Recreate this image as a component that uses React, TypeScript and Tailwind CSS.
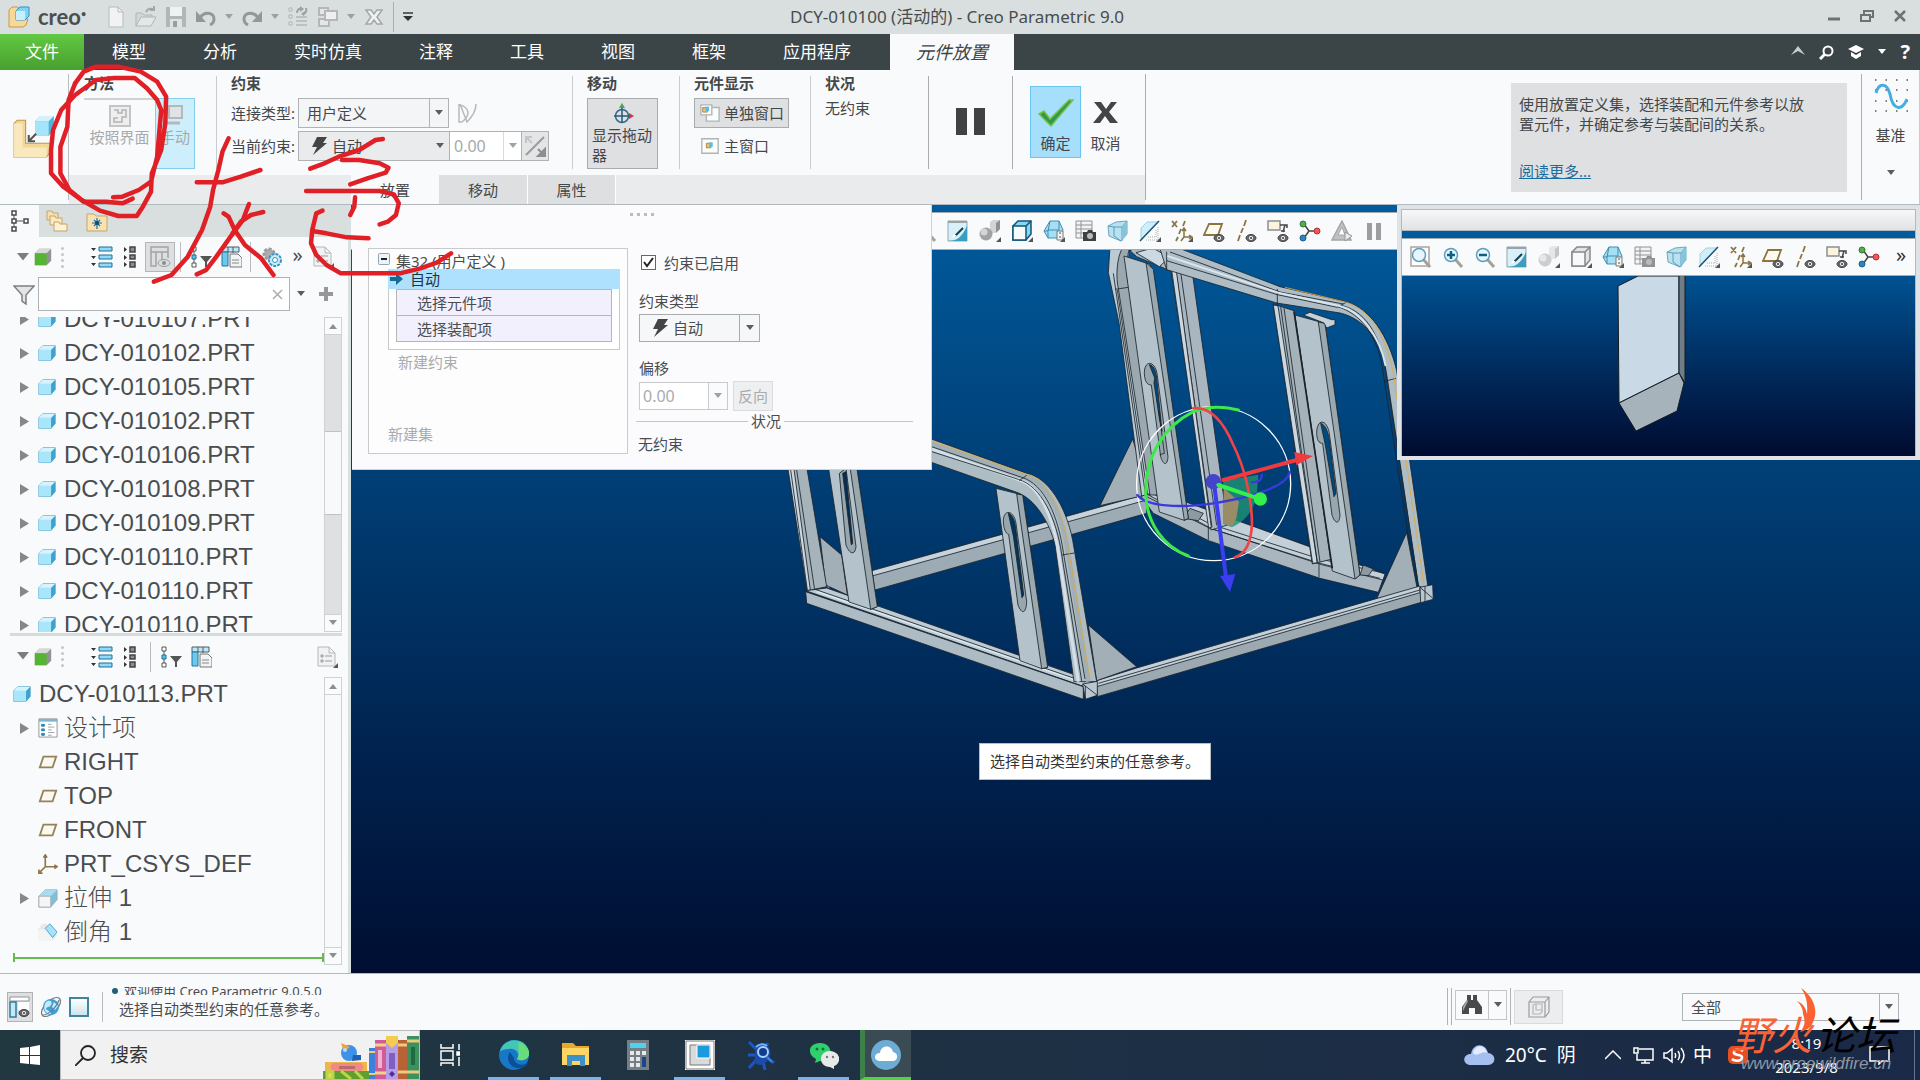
import type { ReactNode } from 'react'

const MENUS = ['模型', '分析', '实时仿真', '注释', '工具', '视图', '框架', '应用程序']

const PARTS = [
  'DCY-010107.PRT',
  'DCY-010102.PRT',
  'DCY-010105.PRT',
  'DCY-010102.PRT',
  'DCY-010106.PRT',
  'DCY-010108.PRT',
  'DCY-010109.PRT',
  'DCY-010110.PRT',
  'DCY-010110.PRT',
  'DCY-010110.PRT',
]

/* ---------- icons ---------- */

function Ico({ children, size = 22 }: { children: ReactNode; size?: number }) {
  return (
    <svg width={size} height={size} viewBox="0 0 22 22" fill="none" className="shrink-0" aria-hidden>
      {children}
    </svg>
  )
}

function Caret({ className = 'text-[#5a5e60]' }: { className?: string }) {
  return (
    <svg width="8" height="6" viewBox="0 0 8 6" className={`shrink-0 ${className}`} aria-hidden>
      <path d="M0 0h8L4 5z" fill="currentColor" />
    </svg>
  )
}

const Bolt = () => (
  <svg width="17" height="18" viewBox="0 0 17 18" className="shrink-0" aria-hidden>
    <path d="M6 0h10l-4 6h4L2 18l4-8H1z" fill="#444" />
  </svg>
)

const Corner = () => <path d="M22 17v5h-5z" fill="#555" />

const CreoLogo = () => (
  <Ico>
    <path d="M1 4l3-3h6v12h10l-2 6-3 2H1z" fill="#f6d898" stroke="#c49a4c" />
    <path d="M8 5l4-4h9v9l-4 4H8z" fill="#7fd4f5" stroke="#2f93bd" />
    <path d="M8 5h9v9H8z" fill="#c9effd" />
  </Ico>
)

const NewFile = () => (
  <Ico><path d="M4 1h9l5 5v15H4z" fill="#f1f3f3" stroke="#b7bbbb" /><path d="M13 1v5h5" stroke="#b7bbbb" /></Ico>
)
const OpenFile = () => (
  <Ico>
    <path d="M1 20V7h6l2 2h8v3" fill="#d2d6d6" stroke="#b1b5b5" />
    <path d="M1 20l5-9h15l-5 9z" fill="#e4e7e7" stroke="#b1b5b5" />
    <path d="M11 6c2-4 5-4 8-2m0-4v4h-4" stroke="#a2a6a6" strokeWidth="2" />
  </Ico>
)
const SaveFile = () => (
  <Ico><path d="M1 1h20v20H1z" fill="#b2b6b6" /><path d="M5 1h12v9H5z" fill="#f0f2f2" /><path d="M5 13h12v8H5z" fill="#dfe2e2" /><path d="M8 15h4v6H8z" fill="#999d9d" /></Ico>
)
const Undo = ({ flip = false }: { flip?: boolean }) => (
  <Ico>
    <g transform={flip ? 'translate(22 0) scale(-1 1)' : undefined}>
      <path d="M5 12c4-7 14-6 14 1 0 3-2 5-4 6" stroke="#939797" strokeWidth="3" />
      <path d="M1 5v11h10z" fill="#939797" />
    </g>
  </Ico>
)
const Regen = () => (
  <Ico>
    <path d="M2 2h3v3H2zM2 9h3v3H2zM2 16h3v3H2z" fill="#e6e9e9" stroke="#aeb2b2" />
    <path d="M9 11h11M9 15h11M9 19h11" stroke="#bcc0c0" strokeWidth="2" />
    <path d="M10 7c0-4 3-5 5-4M19 2c1 3 0 5-3 6" stroke="#9da1a1" strokeWidth="2" />
    <path d="M13 0l4 3-4 3zM18 5l-4 3 3 2z" fill="#9da1a1" />
  </Ico>
)
const WindowsIco = () => (
  <Ico>
    <path d="M2 2h9v7H2z M2 13h10v7H2z" fill="#e4e7e7" stroke="#b4b8b8" strokeWidth="2" />
    <path d="M8 5h12v9H8z" fill="#eef0f0" stroke="#b4b8b8" strokeWidth="2" />
  </Ico>
)
const CloseWin = () => (
  <Ico><path d="M3 4h5l3 4 3-4h5l-5 7 5 7h-5l-3-4-3 4H3l5-7z" fill="#f0f2f2" stroke="#a3a7a7" strokeWidth="1.5" /></Ico>
)

const Part = ({ size = 18 }: { size?: number }) => (
  <Ico size={size}>
    <path d="M1 7l5-5h15v12l-5 6H1z" fill="#8edcf8" stroke="#4a9fc2" />
    <path d="M1 7h15v13H1z" fill="#a9e6fb" />
    <path d="M16 7l5-5v12l-5 6z" fill="#3fa2ce" />
    <path d="M1 7l5-5h15l-5 5z" fill="#d5f4fe" />
  </Ico>
)
const GreenCube = () => (
  <Ico size={20}>
    <path d="M2 7l5-5h13v13l-5 5H2z" fill="#8f9392" />
    <path d="M2 7l5-5h13l-5 5z" fill="#d6d9d8" />
    <path d="M2 7h13v13H2z" fill="#55b533" />
  </Ico>
)
const TreeIco = () => (
  <Ico>
    <path d="M5 4v14M6 11h8" stroke="#555" />
    <path d="M3 1h4v4H3zM3 9h4v4H3zM3 17h4v4H3zM15 9h4v4h-4z" fill="#fff" stroke="#4a4a4a" strokeWidth="1.5" />
  </Ico>
)
const Folders = () => (
  <Ico>
    <path d="M1 1h5l1 2h5v7H1z" fill="#f5dfae" stroke="#c6a566" />
    <path d="M4 6h5l1 2h6v7H4z" fill="#f9e8c2" stroke="#c6a566" />
    <path d="M8 12h5l1 2h7v7H8z" fill="#fdf1d6" stroke="#c6a566" />
  </Ico>
)
const FavFolder = () => (
  <Ico>
    <path d="M1 4h7l2 2h11v15H1z" fill="#f7e2b4" stroke="#c6a566" />
    <path d="M11 8v11M6 13h10M8 10l6 6M14 10l-6 6" stroke="#1d6ea0" strokeWidth="1.2" />
    <circle cx="11" cy="13" r="2" fill="#0d4e78" />
  </Ico>
)
const ExpandAll = () => (
  <Ico>
    <path d="M0 2h5L2.500 5zM0 10h5l-2.500 3zM0 17h5l-2.500 3z" fill="#333" />
    <path d="M8 1h13v4H8zM8 9h13v4H8zM8 17h13v4H8z" fill="#8fdaf7" stroke="#1f6f96" />
  </Ico>
)
const CollapseAll = () => (
  <Ico>
    <path d="M5 1v5l3-2.500zM5 9v5l3-2.500zM5 16v5l3-2.500z" fill="#333" />
    <path d="M11 1h5v5h-5zM11 9h5v4h-5zM11 16h5v5h-5z" fill="#8c8f91" stroke="#444" strokeWidth="1.5" />
  </Ico>
)
const ColumnsEye = () => (
  <Ico>
    <path d="M2 1h17v5H2zM2 6h5v14H2zM7 6h6v14M13 6h6v6" stroke="#a2a4a6" strokeWidth="1.5" />
    <ellipse cx="15" cy="17" rx="6" ry="3.500" fill="#dcdddf" stroke="#9a9c9e" /><circle cx="15" cy="17" r="2" fill="#8a8c8e" />
  </Ico>
)
const TreeFilter = () => (
  <Ico>
    <path d="M4 4v14" stroke="#555" />
    <path d="M2 1h4v4H2zM2 17h4v4H2z" fill="#fff" stroke="#555" />
    <path d="M2 9h4v4H2z" fill="#56c1ea" stroke="#1f6f96" />
    <path d="M10 10h12l-5 6v5h-2v-5z" fill="#555" />
  </Ico>
)
const TreeColumns = () => (
  <Ico>
    <path d="M2 1h17v5H2z" fill="#bfe8f7" stroke="#4a5a62" />
    <path d="M2 6h6v14H2z" fill="#6cc8ec" stroke="#24759c" />
    <path d="M13 1v6M8 1v5" stroke="#4a5a62" />
    <path d="M10 8h8l4 4v9H10z" fill="#f2f3f4" stroke="#777" /><path d="M12 14h7M12 17h7" stroke="#888" />
  </Ico>
)
const Gear = () => (
  <Ico>
    <circle cx="8" cy="8" r="5" fill="#a9adaf" stroke="#9a9ea0" strokeDasharray="3 1.500" strokeWidth="3" />
    <circle cx="14" cy="14" r="6" fill="#c9eefb" stroke="#3a94bd" strokeWidth="2" strokeDasharray="3 1" />
    <circle cx="14" cy="14" r="2.500" fill="#fff" stroke="#3a94bd" />
  </Ico>
)
const Doc = () => (
  <Ico>
    <path d="M2 1h11l6 6v13H2z" fill="#f1f2f3" stroke="#b6b9bb" /><path d="M13 1v6h6" stroke="#b6b9bb" />
    <path d="M5 9h2v2H5zM5 14h2v2H5z" stroke="#999" /><path d="M9 10h7M9 15h7" stroke="#999" />
    <Corner />
  </Ico>
)
const Funnel = () => (
  <Ico>
    <path d="M1 3h20l-8 9v9l-4-3v-6z" fill="#e3e5e6" stroke="#7d8082" strokeWidth="1.500" />
  </Ico>
)
const Plane = () => (
  <Ico size={20}><path d="M6 5h14l-4 12H2z" stroke="#93825a" strokeWidth="2" fill="#fbf8ef" /></Ico>
)
const Csys = () => (
  <Ico size={20}><path d="M8 2v12h13M8 14l-7 7M6 4l2-3 2 3M18 12l3 2-3 2M1 17v4h4" stroke="#8d7748" strokeWidth="1.800" /></Ico>
)
const DesignItems = () => (
  <Ico size={20}>
    <path d="M1 1h20v20H1z" fill="#fff" stroke="#8a9094" /><path d="M1 1h20v3H1z" fill="#7bb7d0" />
    <path d="M4 7h3v2H4zM4 12h3v2H4zM4 17h3v2H4z" fill="#2f9ed0" stroke="#1c7cab" />
    <path d="M11 7h4M11 10h7M11 13h4M11 16h7M11 19h4" stroke="#9a9ea0" />
  </Ico>
)
const Extrude = () => (
  <Ico size={20}>
    <path d="M1 9l7-7h13v11l-7 8H1z" fill="#7cc0dc" stroke="#a4aeb3" /><path d="M8 2h13l-7 7H1z" fill="#a8dcf0" />
    <path d="M1 9h13v12H1z" fill="#f4f5f5" stroke="#a9adaf" />
  </Ico>
)
const Chamfer = () => (
  <Ico size={20}>
    <path d="M0 8l5-6h4l12 12-5 7H0z" fill="#e6e8e9" /><path d="M0 8h8l8 9v4H0z" fill="#f3f4f4" /><path d="M8 7l5-5 8 9-5 6z" fill="#a7e4fb" stroke="#4a9fc2" />
  </Ico>
)

/* view toolbar */
const Zoomer = ({ kind }: { kind: 'fit' | 'in' | 'out' }) => (
  <Ico>
    {kind === 'fit' && <path d="M1 1h18v19H1z" fill="#fff" stroke="#a8a49b" strokeWidth="1.500" />}
    <path d="M13 13l7 8" stroke="#a5a19a" strokeWidth="3" />
    <circle cx="9" cy="9" r="6.500" fill="#e6f6fc" stroke="#5f9fbd" strokeWidth="1.500" />
    {kind !== 'fit' && <path d="M5 9h8" stroke="#0d5f88" strokeWidth="2.500" />}
    {kind === 'in' && <path d="M9 5v8" stroke="#0d5f88" strokeWidth="2.500" />}
  </Ico>
)
const Repaint = () => (
  <Ico>
    <path d="M1 1h19v20H1z" fill="#d8f0f9" stroke="#93a5ad" /><path d="M20 6v15H1c9 0 14-4 19-15z" fill="#3b9dc0" />
    <path d="M1 2h19" stroke="#9ca3a6" strokeWidth="2" /><path d="M8 16l8-8" stroke="#153e52" strokeWidth="2" /><path d="M5 18l2-4 3 2z" fill="#fff" />
  </Ico>
)
const Shade = ({ off = false }: { off?: boolean }) => (
  <Ico>
    <g opacity={off ? 0.5 : 1}>
      <path d="M11 2l3-2h7v9l-5 4h-5z" fill="#d2d4d6" /><path d="M17 3l4-3v9l-4 4z" fill="#8f9193" />
      <circle cx="7" cy="14" r="6.500" fill="#a0a2a4" /><circle cx="5" cy="12" r="3.500" fill="#d3d5d6" />
    </g>
    <Corner />
  </Ico>
)
const BoxView = ({ off = false }: { off?: boolean }) => (
  <Ico>
    <path d="M2 6l5-5h13v13l-5 6H2z" fill={off ? '#e3e4e5' : '#8ad6f2'} stroke={off ? '#888' : '#0f5676'} strokeWidth="1.500" />
    <path d="M2 6h13v14H2zM15 6l5-5" fill="#f6fafb" stroke={off ? '#888' : '#0f5676'} strokeWidth="1.500" />
    <Corner />
  </Ico>
)
const Orient = () => (
  <Ico>
    <path d="M7 1h9l4 9-3 8H5L1 11z" fill="#a6def3" stroke="#3e8fb3" /><path d="M7 1L5 11H1M16 1v9H5l0 8" stroke="#3e8fb3" />
    <path d="M14 11h6v9h-6z" fill="#f4f4f4" stroke="#777" /><path d="M16 13h2M16 17h2" stroke="#555" /><Corner />
  </Ico>
)
const Camera = ({ off = false }: { off?: boolean }) => (
  <Ico>
    <path d="M1 1h16v17H1zM1 5h16M1 9h16M1 13h10M6 1v17" fill="#f2f3f3" stroke="#8f9294" />
    <path d="M8 12h4l1-2h4l1 2h3v9H8z" fill={off ? '#909294' : '#3d3f41'} /><circle cx="15" cy="16" r="3" fill="#b9bbbd" />
  </Ico>
)
const Section = () => (
  <Ico>
    <path d="M1 6l8-4 11-1v13l-6 7-12-5z" fill="#b9e1ef" stroke="#6ba8c1" /><path d="M7 7h8l5-6M15 7v14M7 7v9l7 5M7 7L1 6" stroke="#5c9db8" />
    <path d="M15 7l5-6v13l-6 7z" fill="#85c5dc" />
  </Ico>
)
const DispStyle = () => (
  <Ico>
    <path d="M2 8l6-6h11L2 19z" fill="#cfeefa" stroke="#9fd2e5" /><path d="M7 20h12V7M9 17h8v-7" stroke="#a9abad" strokeDasharray="1 1" />
    <path d="M1 21L20 1" stroke="#1d5670" strokeWidth="1.500" /><Corner />
  </Ico>
)
const DatumAll = () => (
  <Ico>
    <path d="M1 1l5 6M6 1L1 7M14 1l-2 5M10 9l-2 5M7 17l-2 4" stroke="#8b7440" strokeWidth="1.800" />
    <path d="M13 9v8h8M13 17l-3 4M11 11l2-3 2 3M18 15l3 2-3 2" stroke="#8b7440" strokeWidth="1.500" /><Corner />
  </Ico>
)
const EyeDot = ({ x = 16, y = 18 }: { x?: number; y?: number }) => (
  <>
    <ellipse cx={x} cy={y} rx="5" ry="3.500" fill="#666" stroke="#444" /><circle cx={x} cy={y} r="2" fill="#fff" /><circle cx={x} cy={y} r="1" fill="#333" />
  </>
)
const DatumPlane = () => (
  <Ico><path d="M6 4h13l-4 11H1z" fill="#fdfaf2" stroke="#8b7440" strokeWidth="1.800" /><EyeDot /></Ico>
)
const DatumAxis = () => (
  <Ico><path d="M11 0L9 6M8 8l-2 5M5 15l-2 6" stroke="#8b7440" strokeWidth="1.800" /><EyeDot /></Ico>
)
const Annot = () => (
  <Ico><path d="M1 1h12v9H1z" fill="#fdf4e0" stroke="#8b8f91" strokeWidth="1.500" /><path d="M13 5h7v3M18 5l-2 7M14 11h4" stroke="#444" strokeWidth="1.500" /><EyeDot /></Ico>
)
const Spin = () => (
  <Ico>
    <path d="M5 4l5 7-5 7M10 11h8" stroke="#444" strokeWidth="1.500" />
    <circle cx="4" cy="4" r="3" fill="#5aaa55" stroke="#2c7830" /><circle cx="18" cy="11" r="3" fill="#f0555a" stroke="#ba2f35" /><circle cx="4" cy="18" r="3" fill="#2f86bb" stroke="#15618f" />
  </Ico>
)
const Simulate = () => (
  <Ico><path d="M11 1l9 19H1z" fill="#bfc1c3" stroke="#a4a6a8" strokeWidth="1.500" /><path d="M11 7l3 8H7z" fill="#fff" stroke="#a4a6a8" /><path d="M14 12l7 4-7 5z" fill="#ececec" stroke="#96989a" /></Ico>
)
const PauseIco = () => (
  <Ico><path d="M4 3h5v17H4zM13 3h5v17h-5z" fill="#9b9d9f" /></Ico>
)

const Dragger = () => (
  <Ico>
    <circle cx="10" cy="13" r="6.500" stroke="#2b6d8c" strokeWidth="1.500" />
    <path d="M10 3v17M2 13h17" stroke="#235b76" strokeWidth="1.500" />
    <path d="M10 0l3 5H7z" fill="#4aa05a" /><path d="M17 10l5 3-5 3z" fill="#c93a40" />
  </Ico>
)
const WinIco = ({ main = false }: { main?: boolean }) => (
  <Ico size={20}>
    {main
      ? <path d="M2 3h18v16H2z" fill="#fbfcfc" stroke="#b0b4b6" strokeWidth="1.500" />
      : <><path d="M7 5h14v15H7z" fill="#fbfcfc" stroke="#b0b4b6" strokeWidth="1.500" /><path d="M1 2h12v11H1z" fill="#fbfcfc" stroke="#b0b4b6" strokeWidth="1.500" /></>}
    <g transform={main ? 'translate(4 3)' : undefined}>
      <path d="M3 5h5v5H3z" fill="#e9c374" stroke="#a8843c" /><path d="M6 4h4v5H6z" fill="#5dbbe3" />
    </g>
  </Ico>
)

/* ---------- small controls ---------- */

function VLine({ className = 'bg-[#c9cdcf]' }: { className?: string }) {
  return <span className={`w-px shrink-0 ${className}`} aria-hidden />
}

function IconButton({ label, children }: { label: string; children: ReactNode }) {
  return <button type="button" aria-label={label} className="flex shrink-0 items-center justify-center">{children}</button>
}

function Scrollbar({ children }: { children?: ReactNode }) {
  return (
    <div className="flex w-[18px] shrink-0 flex-col border border-[#cfd2d4]" aria-hidden>
      <span className="flex h-[17px] items-center justify-center border-b border-[#cfd2d4] bg-[#fafbfc]"><span className="rotate-180"><Caret className="text-[#8d9092]" /></span></span>
      {children}
      <span className="flex h-[17px] items-center justify-center border-t border-[#cfd2d4] bg-[#fafbfc]"><Caret className="text-[#8d9092]" /></span>
    </div>
  )
}

function TreeRow({ label, icon, arrow = false }: { label: string; icon: ReactNode; arrow?: boolean }) {
  return (
    <li className="flex h-[34px] items-center pl-5 whitespace-nowrap">
      <span className="w-[18px] text-[#85888a]">
        {arrow && <svg width="9" height="11" viewBox="0 0 9 11" aria-hidden><path d="M0 0l9 5.500L0 11z" fill="currentColor" /></svg>}
      </span>
      <span className="w-[26px]">{icon}</span>
      <span>{label}</span>
    </li>
  )
}

/** start of both tree toolbars: menu arrow, model cube, grip, expand and collapse */
function TreeTools() {
  return (
    <>
      <Caret className="mr-1 h-[9px] w-3 text-[#7b7e80]" />
      <GreenCube />
      <span className="ml-1 flex w-[34px] flex-col gap-[3px] pl-1">{[0, 1, 2, 3].map((i) => <i key={i} className="h-[3px] w-[3px] rounded-full bg-[#c4c7c9]" />)}</span>
      <ExpandAll />
      <span className="ml-[6px]"><CollapseAll /></span>
    </>
  )
}

/* ---------- bars ---------- */

function TitleBar() {
  return (
    <header className="flex h-[34px] shrink-0 items-center bg-[#d9dfde]">
      <div className="flex flex-1 items-center gap-2 pl-2">
        <CreoLogo />
        <span className="flex w-[59px] font-['Lato',sans-serif] text-[22px] leading-6 font-bold text-[#4a5052]">creo<span className="text-[9px] leading-[18px]">•</span></span>
        <IconButton label="新建"><NewFile /></IconButton>
        <IconButton label="打开"><OpenFile /></IconButton>
        <IconButton label="保存"><SaveFile /></IconButton>
        <IconButton label="撤消"><Undo /></IconButton>
        <Caret className="text-[#9ba0a0]" />
        <IconButton label="重做"><Undo flip /></IconButton>
        <Caret className="text-[#9ba0a0]" />
        <IconButton label="重新生成"><Regen /></IconButton>
        <IconButton label="窗口"><WindowsIco /></IconButton>
        <Caret className="text-[#9ba0a0]" />
        <IconButton label="关闭窗口"><CloseWin /></IconButton>
        <VLine className="h-[30px] bg-[#a9afaf]" />
        <svg width="12" height="10" viewBox="0 0 12 10" aria-hidden><path d="M1 1h10" stroke="#333" strokeWidth="1.500" /><path d="M1 4h10L6 9z" fill="#333" /></svg>
      </div>
      <h1 className="text-[17px] text-[#474d4f]">DCY-010100 (活动的) - Creo Parametric 9.0</h1>
      <div className="flex flex-1 items-center justify-end gap-5 pr-[14px] pb-[2px] text-[#6d7374]">
        <button type="button" aria-label="最小化"><svg width="12" height="12" viewBox="0 0 12 12"><path d="M0 9h12" stroke="currentColor" strokeWidth="3" /></svg></button>
        <button type="button" aria-label="还原"><svg width="14" height="12" viewBox="0 0 14 12" fill="none"><path d="M4 4V1h9v6h-3M1 5h9v6H1z" stroke="currentColor" strokeWidth="2" /></svg></button>
        <button type="button" aria-label="关闭"><svg width="12" height="12" viewBox="0 0 12 12"><path d="M1 1l10 10M11 1L1 11" stroke="currentColor" strokeWidth="2.500" /></svg></button>
      </div>
    </header>
  )
}

function MenuBar() {
  return (
    <nav className="flex h-9 shrink-0 items-stretch bg-[#3b4446] text-[17px] text-white">
      <button type="button" className="w-[84px] bg-linear-to-b from-[#62c843] to-[#48a02f]">文件</button>
      <div className="mr-[11px] flex gap-px">
        {MENUS.map((m) => <button type="button" key={m} className="px-7">{m}</button>)}
      </div>
      <button type="button" className="w-[124px] bg-[#f9fafc] text-lg text-[#3f4547] italic">元件放置</button>
      <div className="ml-auto flex items-center gap-[14px] pr-[10px]">
        <svg width="14" height="13" viewBox="0 0 14 13" aria-hidden><path d="M0 9l7-9 7 9-7-4z" fill="#c9cdce" /></svg>
        <svg width="15" height="15" viewBox="0 0 15 15" fill="none" aria-hidden><circle cx="9" cy="6" r="4.500" stroke="#fff" strokeWidth="2" /><path d="M6 9l-5 5" stroke="#fff" strokeWidth="3" /></svg>
        <svg width="16" height="14" viewBox="0 0 16 14" aria-hidden><path d="M0 4l8-4 8 4-8 4zM3 7l5 3 5-3v4l-5 3-5-3z" fill="#fff" /></svg>
        <Caret className="text-white" />
        <button type="button" className="text-xl font-bold">?</button>
      </div>
    </nav>
  )
}

function GroupTitle({ children }: { children: ReactNode }) {
  return <h2 className="h-[22px] text-[15px] leading-[15px] font-bold">{children}</h2>
}

function Ribbon() {
  return (
    <section className="flex h-[135px] shrink-0 border-b border-[#b0b9bd] bg-[#f9fafc] text-[15px] leading-5 text-[#44484a]">
      <div className="flex w-[68px] items-center pl-3">
        <svg width="44" height="44" viewBox="0 0 42 42" aria-hidden>
          <path d="M2 8l3-3h8v22h24v8l-4 5H2z" fill="#f3d797" stroke="#bb9550" /><path d="M2 8h8v23h23v9H2z" fill="#fae8bf" />
          <path d="M22 6l5-5h13v13l-5 6H22z" fill="#4db5dd" /><path d="M22 6h13v14H22z" fill="#a5e5fb" /><path d="M22 6l5-5h13l-5 5z" fill="#d2f3fe" />
          <path d="M23 18l-7 7M16 19v6h6" stroke="#555" strokeWidth="2" fill="none" />
        </svg>
      </div>
      <VLine className="my-1 bg-[#b9bdbf]" />

      {/* groups with the dashboard tabs under them */}
      <div className="flex w-[1076px] flex-col">
        <div className="flex h-[105px] pt-[6px] pb-[6px]">
          <div className="w-[147px] pl-[15px]">
            <GroupTitle>方法</GroupTitle>
            <div className="flex text-[#a7aaac]">
              <button type="button" disabled className="flex h-[71px] w-[71px] flex-col items-center border-t-2 border-[#cfd1d3] pt-[5px] whitespace-nowrap">
                <Ico>
                  <path d="M1 1h20v20H1z" fill="#eeeeef" stroke="#c3c5c7" strokeWidth="2" /><path d="M5 5h4v3h4V5h4v7h-4v5H5v-4h4" stroke="#b2b4b6" strokeWidth="1.500" />
                </Ico>
                按照界面
              </button>
              <button type="button" className="flex h-[71px] w-10 flex-col items-center border border-[#86d0ee] bg-[#cdeffc] pt-[6px] whitespace-nowrap">
                <Ico><path d="M5 1h13v12H5z" fill="#dfe3e5" stroke="#b4b8ba" strokeWidth="2" /><path d="M1 18h15" stroke="#b4b8ba" strokeWidth="3" /></Ico>
                手动
              </button>
            </div>
          </div>
          <VLine />

          <div className="w-[355px] pl-[14px]">
            <GroupTitle>约束</GroupTitle>
            <div className="flex h-[30px] items-center">
              <label htmlFor="conn" className="w-[67px]">连接类型:</label>
              <div className="flex h-[30px] w-[151px] items-center border border-[#b0b3b5] bg-[#f4f5f6]">
                <select id="conn" className="h-full flex-1 appearance-none pl-2 outline-none"><option>用户定义</option></select>
                <span className="flex h-full w-[19px] items-center justify-center border-l border-[#b0b3b5]"><Caret /></span>
              </div>
              <span className="ml-[7px]"><Ico><path d="M3 2v18h3C10 17 12 13 12 10 11 6 7 3 3 3M20 2c0 8-4 13-9 18L4 2" stroke="#b6b9bb" strokeWidth="1.500" /></Ico></span>
            </div>
            <div className="mt-[3px] flex h-[30px] items-center">
              <label htmlFor="cur" className="w-[67px]">当前约束:</label>
              <div className="flex h-[30px] w-[152px] items-center border border-[#b0b3b5] bg-[#e9ebec] pl-3">
                <Bolt />
                <select id="cur" className="h-full flex-1 appearance-none pl-1 outline-none"><option>自动</option></select>
                <span className="flex w-[18px] justify-center"><Caret /></span>
              </div>
              <div className="flex h-[30px] items-center border-y border-[#b0b3b5] bg-white">
                <input aria-label="偏移值" defaultValue="0.00" className="w-[53px] px-1 text-base text-[#a6a9ab] outline-none" />
                <span className="flex h-full w-[18px] items-center justify-center border-l border-[#d8dadc]"><Caret className="text-[#9fa2a4]" /></span>
              </div>
              <button type="button" aria-label="更改方向" className="flex h-[30px] w-7 items-center justify-center border border-[#b0b3b5] bg-[#e3e5e6]">
                <Ico><path d="M2 20L20 2" stroke="#999c9e" strokeWidth="2" /><path d="M2 8V2h6M3 3l5 5" stroke="#c3c5c7" strokeWidth="2" /><path d="M21 14v7h-7zM14 14l5 5" fill="#8c8f91" stroke="#8c8f91" strokeWidth="2" /></Ico>
              </button>
            </div>
          </div>
          <VLine />

          <div className="w-[106px] pl-[14px]">
            <GroupTitle>移动</GroupTitle>
            <button type="button" className="flex h-[71px] w-[71px] flex-col items-start border border-[#a9acae] bg-[#dfe0e2] px-1 pt-1 text-left">
              <span className="self-center"><Dragger /></span>
              显示拖动器
            </button>
          </div>
          <VLine />

          <div className="w-[130px] pl-[14px]">
            <GroupTitle>元件显示</GroupTitle>
            <button type="button" className="flex h-[30px] w-[95px] items-center gap-1 border border-[#a9acae] bg-[#dfe0e2] pl-[5px] whitespace-nowrap"><WinIco />单独窗口</button>
            <button type="button" className="mt-[3px] flex h-[30px] items-center gap-1 pl-[6px]"><WinIco main />主窗口</button>
          </div>
          <VLine />

          <div className="flex-1 pl-[14px]">
            <GroupTitle>状况</GroupTitle>
            <p>无约束</p>
          </div>
          <VLine className="bg-[#a9adaf]" />
          <button type="button" aria-label="暂停" className="flex w-[83px] items-center justify-center pb-[2px]">
            <svg width="29" height="27" viewBox="0 0 29 27"><path d="M0 0h11v27H0zM18 0h11v27H18z" fill="#3f4143" /></svg>
          </button>
          <VLine className="bg-[#a9adaf]" />
          <div className="flex w-[132px] pt-[10px] pl-[17px]">
            <button type="button" className="flex h-[72px] w-[51px] flex-col items-center justify-between border border-[#6cc5ee] bg-[#a6dffc] pt-3 pb-1">
              <svg width="36" height="28" viewBox="0 0 36 28"><path d="M1 15l5-3 6 8L31 1h4L13 27z" fill="#2f9a4c" stroke="#7cc142" strokeWidth="1.500" /></svg>
              确定
            </button>
            <button type="button" className="flex h-[72px] w-[49px] flex-col items-center justify-between pt-4 pb-[5px]">
              <svg width="25" height="21" viewBox="0 0 25 21"><path d="M1 0h7l5 7 5-7h6l-8 10 9 11h-8l-5-7-5 7H0l9-11z" fill="#434547" /></svg>
              取消
            </button>
          </div>
        </div>
        <div className="flex flex-1 bg-[#e9ebec] pl-[282px] text-center">
          <button type="button" className="w-[88px] bg-[#f9fafc]">放置</button>
          <button type="button" className="w-[89px] border-r border-white bg-[#dddfe1]">移动</button>
          <button type="button" className="w-[88px] border-r border-white bg-[#dddfe1]">属性</button>
        </div>
      </div>
      <VLine className="my-1 bg-[#a9adaf]" />

      <aside className="mt-[13px] mr-[14px] ml-auto h-[109px] w-[336px] bg-[#dfe0e2] px-2 pt-[11px]">
        <p className="w-[290px]">使用放置定义集，选择装配和元件参考以放置元件，并确定参考与装配间的关系。</p>
        <a href="#more" className="mt-[27px] block text-[#1a6d9f] underline">阅读更多...</a>
      </aside>
      <VLine className="my-1 bg-[#a9adaf]" />
      <button type="button" className="flex w-[58px] flex-col items-center border-r border-[#c9cdcf] pt-[9px]">
        <svg width="34" height="34" viewBox="0 0 34 34" fill="none" aria-hidden>
          <path d="M1 1h33M1 11h33M1 22h33M1 32h33" stroke="#555" strokeWidth="1.500" strokeDasharray="1.500 9" />
          <path d="M2 14C5 3 13 4 16 15c3 17 12 17 17 5" stroke="#45aee0" strokeWidth="3" />
        </svg>
        <span className="mt-3 mb-[25px]">基准</span>
        <Caret />
      </button>
    </section>
  )
}

/* ---------- left side ---------- */

function ModelTree() {
  return (
    <aside className="flex w-[351px] shrink-0 flex-col border-r-[3px] border-[#d8e0e2] bg-[#f9fafc] text-[#4a4d4f]">
      <div className="flex h-8">
        <button type="button" aria-label="模型树" className="flex w-[39px] items-center justify-center"><TreeIco /></button>
        <div className="flex flex-1 items-center gap-[18px] bg-[#d9dfde] pl-[7px]">
          <IconButton label="文件夹浏览器"><Folders /></IconButton>
          <IconButton label="收藏夹"><FavFolder /></IconButton>
        </div>
      </div>
      <div className="flex h-10 items-center pr-[10px] pl-[17px]">
        <TreeTools />
        <button type="button" aria-label="树列" className="ml-1 flex h-[30px] w-[30px] items-center justify-center border border-[#b4b7b9] bg-[#dedfe1]"><ColumnsEye /></button>
        <VLine className="mr-[9px] ml-[5px] h-[30px] bg-[#b9bcbe]" />
        <TreeFilter />
        <span className="ml-2"><TreeColumns /></span>
        <VLine className="mx-2 h-[30px] bg-[#b9bcbe]" />
        <span className="ml-[2px]"><Gear /></span>
        <span className="w-[29px] pb-1 text-center text-xl leading-5">»</span>
        <Doc />
      </div>
      <div className="flex h-[34px] items-center">
        <span className="flex w-[38px] justify-end pr-[3px]"><Funnel /></span>
        <div className="flex h-[34px] w-[252px] items-center border border-[#aeb2b4] bg-white pr-[6px]">
          <input aria-label="搜索模型树" className="w-full min-w-0 flex-1 px-1 outline-none" />
          <svg width="11" height="11" viewBox="0 0 11 11" aria-hidden><path d="M1 1l9 9M10 1l-9 9" stroke="#a9acae" strokeWidth="1.500" /></svg>
        </div>
        <span className="ml-[7px]"><Caret /></span>
        <svg width="14" height="14" viewBox="0 0 14 14" className="ml-[14px]" aria-hidden><path d="M7 0v14M0 7h14" stroke="#96999b" strokeWidth="4" /></svg>
      </div>

      <div className="mt-[6px] mr-[6px] flex h-[315px]">
        <div className="flex-1 overflow-hidden">
          <ul className="-mt-[15px] font-['Liberation_Sans','Noto_Sans_CJK_SC',sans-serif] text-2xl font-light">
            {PARTS.map((p, i) => <TreeRow key={i} label={p} icon={<Part />} arrow />)}
          </ul>
        </div>
        <Scrollbar>
          <div className="flex flex-1 flex-col bg-[#dfe0e2] pt-[96px]"><span className="h-[84px] border-y border-[#bfc2c4] bg-[#f8f9fa]" /></div>
        </Scrollbar>
      </div>
      <div className="mt-px mr-[6px] ml-[10px] h-[3px] bg-[#d5dadb]" />

      <div className="flex h-[41px] items-center pr-[10px] pl-[17px]">
        <TreeTools />
        <VLine className="mx-[9px] h-[30px] bg-[#b9bcbe]" />
        <TreeFilter />
        <span className="ml-2"><TreeColumns /></span>
        <span className="ml-auto"><Doc /></span>
      </div>
      <div className="mr-[6px] mb-2 flex flex-1">
        <div className="flex flex-1 flex-col">
          <ul className="font-['Liberation_Sans','Noto_Sans_CJK_SC',sans-serif] text-2xl font-light">
            <li className="flex h-[34px] items-center pl-[13px]"><span className="w-[26px]"><Part /></span>DCY-010113.PRT</li>
            <TreeRow label="设计项" icon={<DesignItems />} arrow />
            <TreeRow label="RIGHT" icon={<Plane />} />
            <TreeRow label="TOP" icon={<Plane />} />
            <TreeRow label="FRONT" icon={<Plane />} />
            <TreeRow label="PRT_CSYS_DEF" icon={<Csys />} />
            <TreeRow label="拉伸 1" icon={<Extrude />} arrow />
            <TreeRow label="倒角 1" icon={<Chamfer />} />
          </ul>
          <div className="mt-1 ml-[13px] flex h-[9px] items-center border-x-2 border-[#67bb4b]"><span className="h-[2px] w-full bg-[#67bb4b]" /></div>
        </div>
        <Scrollbar><div className="flex-1 bg-[#f8f9fa]" /></Scrollbar>
      </div>
    </aside>
  )
}

/* ---------- placement flyout ---------- */

function PlacementPanel() {
  return (
    <section className="absolute top-0 left-px h-[265px] w-[580px] border-r border-b border-[#cfd3d6] bg-[#fbfbfd] text-[15px] leading-5 text-[#4a4d4f]">
      <div className="flex h-[43px] justify-center gap-1 pt-2">
        {[0, 1, 2, 3].map((i) => <i key={i} className="h-[3px] w-[3px] bg-[#b9bcbe]" />)}
      </div>
      <div className="flex">
        <div className="ml-4 h-[206px] w-[260px] border border-[#c8cacc] bg-[#fdfdfe] pr-[7px] pl-[19px]">
          <div className="-ml-[10px] flex h-[20px] items-center gap-[6px]">
            <svg width="12" height="12" viewBox="0 0 12 12" aria-hidden><rect x=".5" y=".5" width="11" height="11" rx="1" fill="#eef3f7" stroke="#8fa6b8" /><path d="M3 6h6" stroke="#222" strokeWidth="2" /></svg>
            <span className="pt-1">集32 (用户定义 )</span>
          </div>
          <button type="button" className="flex h-5 w-full items-center gap-[7px] bg-[#aee1fd] pl-[2px] text-[#1f3442]">
            <svg width="13" height="12" viewBox="0 0 13 12" aria-hidden><path d="M0 4h6V0l7 6-7 6V8H0z" fill="#176b93" /></svg>
            自动
          </button>
          <div className="h-[61px] border border-t-0 border-[#c8cacc] bg-white px-[7px]">
            <button type="button" className="block h-[27px] w-full border border-[#b4b6b8] bg-[#f3f0fd] pl-5 text-left">选择元件项</button>
            <button type="button" className="-mt-px block h-[27px] w-full border border-[#b4b6b8] bg-[#f3f0fd] pl-5 text-left">选择装配项</button>
          </div>
          <button type="button" className="mt-[2px] block pl-[10px] text-[#a9abad]">新建约束</button>
          <button type="button" className="mt-[52px] block text-[#a9abad]">新建集</button>
        </div>

        <div className="ml-[8px] w-[277px]">
          <label className="ml-[5px] flex h-[30px] items-center gap-2 pb-px">
            <input type="checkbox" defaultChecked className="peer sr-only" />
            <span className="flex h-[15px] w-[15px] items-center justify-center border border-[#666] bg-white">
              <svg width="11" height="11" viewBox="0 0 11 11" fill="none" aria-hidden><path d="M1 5l3 4 6-8" stroke="#222" strokeWidth="2" /></svg>
            </span>
            约束已启用
          </label>
          <label htmlFor="ctype" className="mt-[13px] ml-[3px] block">约束类型</label>
          <div className="mt-[3px] ml-[3px] flex h-7 w-[121px] items-center border border-[#a9acae] bg-[#f6f7f8] pl-3">
            <Bolt />
            <select id="ctype" className="h-full flex-1 appearance-none pl-1 outline-none"><option>自动</option></select>
            <span className="flex h-full w-5 items-center justify-center border-l border-[#a9acae]"><Caret /></span>
          </div>
          <label htmlFor="offset" className="mt-4 ml-[3px] block">偏移</label>
          <div className="mt-[3px] ml-[3px] flex items-center gap-[5px] text-[#a9abad]">
            <div className="flex h-7 w-[89px] items-center border border-[#c8cacc] bg-white">
              <input id="offset" defaultValue="0.00" className="w-full min-w-0 flex-1 px-[3px] text-base outline-none" />
              <span className="flex h-full w-[19px] items-center justify-center border-l border-[#c8cacc] bg-[#fafbfc]"><Caret className="text-[#9fa2a4]" /></span>
            </div>
            <button type="button" className="h-[30px] w-10 border border-[#d9dbdd] bg-[#eeeff0]">反向</button>
          </div>
          <div className="flex h-5 items-center gap-[3px]">
            <span className="h-px w-[112px] bg-[#c3c5c7]" />状况<span className="h-px flex-1 bg-[#c3c5c7]" />
          </div>
          <p className="mt-[3px] ml-[2px]">无约束</p>
        </div>
      </div>
    </section>
  )
}

/* ---------- 3D scene ---------- */

function Slot({ d, hole, fill = '#004a82' }: { d: string; hole: string; fill?: string }) {
  return (
    <>
      <path d={hole} fill="#98a6ae" />
      <path d={d} fill={fill} />
    </>
  )
}

/** welded frame, drawn at three units per pixel */
function FrameModel() {
  return (
    <svg viewBox="351 205 1569 768" preserveAspectRatio="xMinYMin meet" className="absolute inset-0 h-full w-full" fill="none" aria-hidden>
      <g transform="translate(760 240) scale(.33333)" stroke="#1b232a" strokeWidth="2.500" strokeLinejoin="round">
        {/* rear rails */}
        <path d="M200 1030L1160 762v58L345 1050l-82 15z" fill="#9dabb4" />
        <path d="M200 1030L1160 762v18L202 1045z" fill="#c6d3dc" />
        <path d="M1140 765l60-5 450 160 225 82-20 55-175-42-334-113-166-82z" fill="#a9b6bf" />
        <path d="M1160 762l40-4 675 244-6 18-184-46-330-108z" fill="#c3d0d9" />
        <path d="M1160 770l190 95 330 105 180 45M1180 762l170 90 330 105 190 42M1345 860v40M1677 970v42" />
        <path d="M1270 835l20-30 40 15-15 22z" fill="#8d9aa2" />
        {/* rear gusset, rear left leg */}
        <path d="M1118 597l-98 200 150-35z" fill="#a3afb7" />
        <path d="M1050 20l60-2-10 90 100 645-55 15-68-520-32-150z" fill="#bccad3" />
        <path d="M1090 20c-22 30-22 100-15 125l95 620h30l-95-635c-8-35-5-80 5-112z" fill="#9ba8b0" />
        <path d="M1060 100l96 660M1072 150l91 615M1065 148l40-6" />
        <path d="M1092 48l78 25 115 762-12 6-75-25z" fill="#b4c3cb" />
        <path d="M1158 68l22 20 105 747-12 6z" fill="#9aa8b0" />
        <Slot hole="M1153 400c0-40 30-40 38 0l33 250c-2 30-15 25-22 0l-28-215c-12 0-20-10-21-35z" d="M1168 374c12 0 20 20 22 40l16 160-8-40-16-105 2-15z" />
        <path d="M1196 510l17 130-14 4" />
        {/* rear middle leg */}
        <path d="M1232 85l66 20 105 750-50 15z" fill="#a9b6bf" />
        <path d="M1248 92l108 770M1262 96l108 760" /><path d="M1235 90l14 2 105 770-8 2z" fill="#cbd8e1" />
        {/* rear right leg with slotted plate */}
        <path d="M1540 192l62 20 115 745-60 15z" fill="#a5b2ba" />
        <path d="M1540 195l14 3 118 770-14 2z" fill="#cbd8e1" /><path d="M1562 200l110 768M1572 204l108 762" />
        <path d="M1605 225l90 25 105 755-15 12-68-24z" fill="#b4c3cb" />
        <path d="M1675 246l20 4 105 755-15 12z" fill="#9aa8b0" />
        <path d="M1602 215l115 770" strokeWidth="5" />
        <Slot hole="M1670 580c0-45 30-45 38 0l32 245c-2 30-15 27-24 0l-28-215c-12 0-17-10-18-30z" d="M1682 550c15 5 22 25 26 50l20 160-6 10-26-155z" />
        {/* rear top tube */}
        <path d="M1110 32l30-14 90-4 40 20-40 58-100-42z" fill="#aab8c0" />
        <path d="M1128 38l50-14 50 28-30 28z" fill="#ccd9e2" />
        <path d="M1200 26l50-4 310 118 200 46c70 20 125 100 150 206l94 650h-28l-100-655c-15-85-60-150-136-168l-190-30-330-100z" fill="#aebcc5" />
        <path d="M1220 62l332 102 180 38M1220 35v57M1552 147v48M1230 36l330 120 190 36M1732 200c70 20 115 85 133 170l102 660M1760 186l-28 16M1870 425l38-10M1740 195c90 20 125 110 142 220l96 640" />
        <path d="M1222 48l332 110 185 40c65 16 120 90 138 180" stroke="#d9e5ee" strokeWidth="6" />
        <path d="M1575 142l185 45c75 25 115 100 140 210l92 640" stroke="#e0a93c" />
        <path d="M1630 225l20-8 65 22h10v15l-25 10-8-15z" fill="#c4d1da" />
        <path d="M1940 878l-90 198 122-28z" fill="#a3afb7" />
        <path d="M1800 1005l10-30 30 12-15 20z" fill="#8d9aa2" />

        {/* near left leg, gusset and plate */}
        <path d="M180 890l65 55 17 120-65-30z" fill="#a3afb7" />
        <path d="M83 680h57l60 360-55 12z" fill="#a6b3bb" />
        <path d="M83 680h18l50 370-10 2z" fill="#cbd8e1" /><path d="M110 690l54 360M92 690l50 360" />
        {/* front rails */}
        <path d="M137 1052l63-8 800 280-30 15z" fill="#bdcbd4" />
        <path d="M137 1055l833 285v38L140 1090z" fill="#adbbc4" />
        <path d="M170 1054l795 272" stroke="#dce8f0" strokeWidth="6" /><path d="M165 1048l810 278" />
        <path d="M1010 1325l974-284v46l-972 283z" fill="#9ca9b1" />
        <path d="M1010 1322l120-38 850-246v20L1010 1340z" fill="#c3d0d9" /><path d="M1015 1330l965-280" />
        <path d="M205 680h85l62 420-20 8-65-22z" fill="#b4c3cb" />
        <path d="M270 680h20l62 420-20 8z" fill="#9aa8b0" />
        <Slot hole="M238 700l20-15 30 235c-3 28-20 22-30-5z" d="M248 700l10-5 20 215-4 5z" fill="#002f5c" />
        <path d="M985 1155l145 125-120 42z" fill="#a3afb7" />
        {/* near middle plate */}
        <path d="M708 745l80 20 75 517-18 4-65-24z" fill="#b4c3cb" />
        <path d="M770 762l18 3 75 517-18 4z" fill="#9aa8b0" />
        <Slot hole="M730 840c3-35 32-28 38 10l32 235c-2 38-15 38-26 10l-28-212c-10-2-16-20-16-43z" d="M745 820c14 5 20 25 22 45l24 200-5 8-26-185z" fill="#003562" />
        {/* near arch */}
        <path d="M500 592l300 108c65 12 118 100 138 200l72 425h-68l-57-410c-15-65-60-140-115-158L500 662z" fill="#aebcc4" />
        <path d="M500 606l298 103c60 18 108 110 125 220l62 396" stroke="#a1afb7" strokeWidth="14" />
        <path d="M500 622l278 98c65 18 100 120 115 200l62 405" stroke="#d3e0e9" strokeWidth="9" />
        <path d="M500 630l275 88c70 20 115 120 130 225l60 380M500 615l285 97c70 20 110 120 125 225l65 380M778 722l22-16M905 945l38-6" />
        <path d="M500 598l305 107c55 12 105 105 120 220l65 395" stroke="#e0a93c" />
        <path d="M968 1332l44-8v42l-36 12zM968 1332l44 34M976 1378v-40M1980 1042l38-8 2 44-38 10zM1980 1042l40 34M1995 1040v45" fill="#b9c7d0" />
      </g>

      {/* dragger */}
      <g transform="translate(1080 240) scale(.33333)" strokeLinecap="round">
        <path d="M430 722l105-18-5 60c-10 50-35 80-75 98l-25-10z" fill="#1f9476" fillOpacity=".8" />
        <path d="M432 745l45 40-8 50-14 25-25-10z" fill="#9a8c66" />
        <circle cx="401" cy="731" r="231" stroke="#fff" strokeWidth="4" />
        <path d="M172 765c28 35 128 40 228 25 120-20 220-50 230-95M545 705c2 15-10 22-30 22" stroke="#3a3adb" strokeWidth="7" />
        <path d="M475 510c-55-15-95-10-135 5-90 45-145 135-143 245 3 90 53 160 128 188" stroke="#3ce84a" strokeWidth="9" />
        <path d="M340 505c50-5 90 40 120 110 35 70 55 160 56 235-2 60-20 92-51 102" stroke="#ef4348" strokeWidth="8" />
        <path d="M404 745l33 260" stroke="#3c3cf0" strokeWidth="12" />
        <path d="M420 1008l46-6-16 54z" fill="#3c3cf0" />
        <path d="M430 720l220-60" stroke="#ef3b40" strokeWidth="12" />
        <path d="M643 636l56 12-50 28z" fill="#ef3b40" />
        <circle cx="400" cy="725" r="23" fill="#4444c8" />
        <path d="M415 735l110 37" stroke="#33f04a" strokeWidth="12" />
        <circle cx="541" cy="777" r="20" fill="#33f04a" />
      </g>
    </svg>
  )
}

function ComponentWindow() {
  return (
    <section className="absolute top-0 right-0 w-[523px] border-4 border-[#dfe3e5] bg-[#dfe3e5]">
      <div className="h-[22px] border border-[#b3b9bc] bg-linear-to-b from-[#f8f8f9] to-[#e0e2e4]" />
      <div className="border-x border-[#b3b9bc]">
        <div className="h-[7px] bg-[#005c9d]" />
        <div className="flex h-[38px] items-center gap-[10px] border-y border-[#a4abae] bg-[#f9fafc] pl-2">
          <Zoomer kind="fit" /><Zoomer kind="in" /><Zoomer kind="out" /><Repaint /><Shade off /><BoxView off /><Orient /><Camera off />
          <Section /><DispStyle /><DatumAll /><DatumPlane /><DatumAxis /><Annot /><Spin />
          <span className="w-[22px] pb-1 text-center text-xl leading-5 text-[#333]">»</span>
        </div>
        <div className="h-[180px] bg-linear-to-b from-[#005293] to-[#000b30]">
          <svg width="500" height="180" viewBox="1403 276 500 180" stroke="#111a22" aria-hidden>
            <path d="M1619 286l20-10h41v97l-60 30z" fill="#c9d9e6" />
            <path d="M1680 270h6v113l-6-10z" fill="#707d86" />
            <path d="M1620 403l60-30 5 10-7 28-41 20z" fill="#a6b3bb" />
          </svg>
        </div>
      </div>
    </section>
  )
}

function Viewport() {
  return (
    <main className="relative flex-1 overflow-hidden bg-linear-to-b from-[#005c9e] to-[#000e32] pt-[7px]">
      <FrameModel />
      <div className="relative mr-[523px] flex h-[38px] items-center justify-end gap-[10px] border-y border-[#a4abae] bg-[#f9fafc] pr-3">
        <Zoomer kind="out" /><Repaint /><Shade /><BoxView /><Orient /><Camera /><Section /><DispStyle /><DatumAll />
        <DatumPlane /><DatumAxis /><Annot /><Spin /><Simulate /><PauseIco />
      </div>
      <PlacementPanel />
      <ComponentWindow />
      <div role="tooltip" className="absolute top-[538px] left-[628px] border border-[#b9bdbf] bg-white px-[10px] pt-[7px] pb-2 text-[15px] leading-5 text-[#333]">选择自动类型约束的任意参考。</div>
    </main>
  )
}

/* ---------- bottom ---------- */

function StatusBar() {
  return (
    <footer className="flex h-[57px] shrink-0 border-t border-[#b0b9bd] bg-[#f9fafc] text-[15px] leading-5 text-[#4a4d4f]">
      <div className="flex items-center gap-[7px] pt-[14px] pb-[5px] pl-[7px]">
        <button type="button" aria-label="导航器" className="flex h-[30px] w-[26px] items-center justify-center border border-[#b0b3b5] bg-[#dedfe1]">
          <Ico><path d="M1 1h19v4H1z" fill="#fff" stroke="#90969a" /><path d="M1 6h6v15H1z" fill="#c4e8f6" stroke="#2e7ea3" strokeWidth="1.500" /><path d="M9 6h11v8H9z" fill="#fff" /><EyeDot y={17} x={15} /></Ico>
        </button>
        <Ico>
          <ellipse cx="11" cy="11" rx="12" ry="6" transform="rotate(-45 11 11)" stroke="#777d81" strokeWidth="1.200" />
          <circle cx="11" cy="11" r="8" fill="#3f9fd4" /><path d="M6 6c4-3 7 0 5 3s-4 1-5 4c2 2 5 2 5 5-6 0-9-6-5-12zM14 6l4 4-3 4-3-3z" fill="#c5eafb" />
          <path d="M3 19c4 0 13-6 16-15" stroke="#777d81" strokeWidth="1.200" />
        </Ico>
        <span className="h-5 w-5 border-2 border-[#3f83a8] bg-linear-to-b from-white to-[#cfe2ec]" />
        <VLine className="ml-[6px] h-[30px] bg-[#b9bcbe]" />
      </div>
      <div className="pt-[13px] pl-[7px]">
        <div className="flex h-2 items-center gap-[6px] overflow-hidden pl-[2px] text-[13px]"><i className="h-[6px] w-[6px] rounded-full bg-[#1d6078]" /><span>欢迎使用 Creo Parametric 9.0.5.0</span></div>
        <p className="mt-1 pl-[9px]">选择自动类型约束的任意参考。</p>
      </div>
      <div className="ml-auto flex gap-[3px] pt-[14px]">
        <VLine className="h-[37px] bg-[#b0b3b5]" /><VLine className="h-[37px] bg-[#b0b3b5]" />
        <div className="mt-[2px] flex h-[30px] border border-[#c3c6c8]">
          <button type="button" aria-label="查找" className="flex w-[33px] items-center justify-center border-r border-[#c3c6c8]">
            <Ico><path d="M6 1h4v5h2V1h4v5l5 7v7h-7v-6H8v6H1v-7l5-7z" fill="#484a4c" /><path d="M6 6l-4 7v4l5-10z" fill="#a9abad" /></Ico>
          </button>
          <span className="flex w-[17px] items-center justify-center"><Caret /></span>
        </div>
        <VLine className="h-[37px] bg-[#b0b3b5]" />
        <button type="button" aria-label="几何过滤" className="mt-[2px] flex h-[34px] w-[49px] items-center justify-center border border-[#d8dadc] bg-[#ebedee]">
          <Ico><path d="M1 6l4-5h16v15l-4 5H1zM1 6h16v15M17 6l4-5" stroke="#9a9da0" strokeWidth="1.200" /><path d="M5 9l2-1h7v8l-2 2H5zM8 8v6h6" stroke="#b4b6b8" strokeWidth="1.200" /></Ico>
        </button>
      </div>
      <div className="mt-[19px] mr-[21px] ml-[119px] flex h-7 w-[217px] border border-[#b0b3b5]">
        <select aria-label="选择过滤器" className="flex-1 appearance-none pl-2 outline-none"><option>全部</option></select>
        <span className="flex w-[19px] items-center justify-center border-l border-[#b0b3b5]"><Caret /></span>
      </div>
    </footer>
  )
}

function Books() {
  return (
    <svg width="96" height="44" viewBox="0 0 96 44" aria-hidden>
      <path d="M2 27h42v9H2z" fill="#efb64e" /><path d="M10 28h28l3 4-3 4H10l-3-4z" fill="#f08a85" /><path d="M16 31h16v3H16z" fill="#b96c6c" />
      <path d="M0 36h46v8H0z" fill="#5f9e31" /><path d="M4 37h6v7H4zM18 36l10 8M32 36l8 8" stroke="#b9d648" strokeWidth="3" fill="#f0d460" />
      <circle cx="26" cy="18" r="8" fill="#3c92e8" /><path d="M18 8l9 4-6 5z" fill="#f1a13a" /><path d="M30 20l8 0v5l-9 1z" fill="#1e62b6" /><circle cx="22" cy="15" r="2" fill="#b5ddff" />
      <path d="M46 13h6v31h-6z" fill="#3b82dc" /><path d="M46 17h6M46 39h6" stroke="#f0cf6b" strokeWidth="2" />
      <path d="M52 5h11v39H52z" fill="#d05c98" /><path d="M52 10h11M52 38h11" stroke="#f3d18a" strokeWidth="3" /><path d="M55 15h4v18h-4z" fill="#efb3cf" />
      <path d="M63 1h12v43H63z" fill="#b79ce6" /><path d="M63 1h12v7l-6 5-6-5z" fill="#f1cb52" /><path d="M66 18h6v16h-6z" fill="#7f60c2" /><path d="M69 36l3 3-3 3-3-3z" fill="#4e2f95" />
      <path d="M75 5h9v39h-9z" fill="#b96236" /><path d="M75 10h9M75 37h9" stroke="#f0c980" strokeWidth="3" />
      <path d="M84 1h12v43H84z" fill="#3d9160" /><path d="M84 6h12M84 37h12" stroke="#e8cc79" strokeWidth="3" /><path d="M88 12h4v18h-4z" fill="#1f6a40" />
    </svg>
  )
}

function TaskApp({ label, open = false, children }: { label: string; open?: boolean; children: ReactNode }) {
  return (
    <button type="button" aria-label={label} className={`flex w-[51px] items-center justify-center border-b-[3px] pt-[3px] ${open ? 'border-[#76b5ea]' : 'border-transparent'}`}>
      <svg width="30" height="30" viewBox="0 0 30 30" fill="none">{children}</svg>
    </button>
  )
}

function Taskbar() {
  return (
    <div className="flex h-[50px] shrink-0 bg-linear-to-r from-[#223840] to-[#1a2947] text-white">
      <button type="button" aria-label="开始" className="flex w-[60px] items-center justify-center">
        <svg width="20" height="20" viewBox="0 0 20 20" fill="#fff"><path d="M0 3l9-1v8H0zM10 2l10-2v10H10zM0 11h9v8l-9-1zM10 11h10v9l-10-1z" /></svg>
      </button>
      <label className="flex w-[360px] items-center border border-[#b9bcbe] bg-[#f1f1f1] pl-[14px]">
        <svg width="21" height="21" viewBox="0 0 21 21" fill="none" aria-hidden><circle cx="13" cy="8" r="7" stroke="#222" strokeWidth="1.800" /><path d="M8 13l-8 8" stroke="#222" strokeWidth="1.800" /></svg>
        <input aria-label="搜索" placeholder="搜索" className="w-0 flex-1 pl-[14px] text-[19px] outline-none placeholder:text-[#333]" />
        <span className="self-end"><Books /></span>
      </label>
      <button type="button" aria-label="任务视图" className="flex w-[60px] items-center justify-center">
        <svg width="20" height="22" viewBox="0 0 20 22" fill="none" stroke="#fff" strokeWidth="1.500"><path d="M1 0v4h12V0M1 7h12v9H1zM1 22v-3h12v3M19 0v6M19 13v9" /><path d="M17 8h3v3h-3z" fill="#fff" /></svg>
      </button>
      <div className="ml-2 flex gap-[11px]">
        <TaskApp label="Edge" open>
          <circle cx="15" cy="15" r="15" fill="#1878c8" /><path d="M1 12C4-3 27-4 30 12c1 8-8 10-12 7 4-6-2-11-8-10-4 0-8 1-9 3z" fill="#43c6b4" />
          <path d="M20 2c8 3 11 9 10 13-2 6-9 6-12 4 4-6 0-9 2-17z" fill="#6bdc7c" /><path d="M11 12c-5 7 0 18 12 16 3-1 5-3 6-5-8 4-14 0-14-5z" fill="#0c4f95" />
        </TaskApp>
        <TaskApp label="文件资源管理器" open>
          <path d="M1 3h11l3 3h13v19H1z" fill="#e7a82c" /><path d="M1 8h27v17H1z" fill="#fbd566" /><path d="M6 26V15h18v11h-5v-5h-8v5z" fill="#3f8fc9" />
        </TaskApp>
        <TaskApp label="计算器">
          <path d="M4 0h22v30H4z" fill="#767d83" /><path d="M7 3h16v5H7z" fill="#4fd2ee" /><path d="M7 11h4v4H7zM13 11h4v4h-4zM19 11h4v4h-4zM7 17h4v4H7zM13 17h4v4h-4zM7 23h4v4H7zM13 23h4v4h-4z" fill="#e6e9eb" /><path d="M19 17h4v10h-4z" fill="#17488c" />
        </TaskApp>
        <TaskApp label="Creo" open>
          <path d="M0 0h30v30H0z" fill="#fff" /><path d="M1 1h28v28H1z" stroke="#777" /><path d="M5 5h20v20H5z" fill="#d8dadb" stroke="#777" /><path d="M12 5h13v13H12z" fill="#189cdd" stroke="#fff" />
        </TaskApp>
        <TaskApp label="PTC 工具">
          <path d="M2 2l8 8M2 28l9-10M21 3l-5 8M27 23l-9-7M1 15h8M16 21l2 9" stroke="#1c56c4" strokeWidth="3" /><path d="M9 6c8-6 16 0 14 10-3 8-10 12-16 6 2-6 0-10 2-16z" fill="#1b4bab" /><circle cx="16" cy="12" r="5" fill="#143c8c" stroke="#a9d2ff" strokeWidth="2" /><path d="M9 7c3-3 8-4 11-1" stroke="#69b2ff" strokeWidth="2" /><path d="M20 17l5 5" stroke="#3c86e4" strokeWidth="2" />
        </TaskApp>
        <TaskApp label="微信" open>
          <path d="M11 3c14 0 14 18 0 18l-5 2 1-4C-3 14 0 3 11 3z" fill="#2fd06b" /><circle cx="8" cy="9" r="1.500" fill="#15713a" /><circle cx="14" cy="9" r="1.500" fill="#15713a" />
          <path d="M21 11c12 1 11 13 4 15v3l-4-2c-12 0-12-16 0-16z" fill="#e8eaea" /><circle cx="18" cy="17" r="1.200" fill="#777" /><circle cx="24" cy="17" r="1.200" fill="#777" />
        </TaskApp>
        <button type="button" aria-label="云盘" className="flex w-[51px] items-center justify-center border-b-[3px] border-l-[5px] border-b-[#4bd83f] border-l-[#3e8049] bg-[#3a4b54] pt-[3px] pr-[5px]">
          <svg width="30" height="30" viewBox="0 0 30 30"><circle cx="15" cy="15" r="15" fill="#6dadd3" /><path d="M8 21c-6-1-5-8 1-8 1-9 12-8 13-1 6 1 5 9 0 9z" fill="#fff" /></svg>
        </button>
      </div>

      <div className="ml-auto flex items-center pr-[5px]">
        <svg width="31" height="21" viewBox="0 0 31 21" aria-hidden><path d="M7 20c-9 0-9-11 0-11C9-3 22-2 24 8c9 1 8 12 0 12z" fill="#a5bff0" /><path d="M9 8c2-9 12-9 14 0-5-3-10 5-14 0z" fill="#e4edff" /></svg>
        <span className="ml-[10px] w-[100px] text-[19px] whitespace-nowrap">20°C&nbsp; 阴</span>
        <svg width="16" height="10" viewBox="0 0 16 10" fill="none" stroke="#fff" strokeWidth="1.500" aria-hidden><path d="M0 9l8-8 8 8" /></svg>
        <svg width="21" height="17" viewBox="0 0 21 17" fill="none" stroke="#fff" strokeWidth="1.500" className="ml-3" aria-hidden><path d="M6 2h14v11H4V7M8 16h9M1 1h4v5H1zM12 13v3" /></svg>
        <svg width="22" height="17" viewBox="0 0 22 17" fill="none" stroke="#fff" strokeWidth="1.500" className="ml-[9px]" aria-hidden><path d="M1 6h3l5-4v13l-5-4H1zM12 6c1 2 1 3 0 5M15 4c2 3 2 6 0 9M18 1c4 5 4 10 0 15" /></svg>
        <span className="ml-2 text-[19px]">中</span>
        <svg width="20" height="18" viewBox="0 0 20 18" fill="none" className="ml-4" aria-hidden><rect width="20" height="18" rx="5" fill="#e64f22" /><path d="M15 5C10 2 5 4 6 7s9 1 8 5-8 3-10 1" stroke="#fff" strokeWidth="2.500" /></svg>
        <div className="w-[121px] pr-1 text-center text-[15px] leading-6"><div>8:19</div><div>2023/9/8</div></div>
        <svg width="21" height="19" viewBox="0 0 21 19" fill="none" stroke="#fff" strokeWidth="1.500" aria-hidden><path d="M1 1h19v14h-7l-3 3v-3H1z" /></svg>
        <VLine className="ml-6 h-[50px] bg-[#66748c]" />
      </div>
    </div>
  )
}

/* ---------- layers over the page ---------- */

/** hand-drawn red notes over the ribbon */
function RedInk() {
  return (
    <svg viewBox="0 0 1568 900" preserveAspectRatio="none" className="pointer-events-none absolute top-0 left-0 h-[300px] w-[640px]" fill="none" stroke="#e01f26" aria-hidden>
      <g strokeWidth="4.500" strokeLinecap="round" strokeLinejoin="round">
        {[
          'M184 250L205 215L235 200H290L345 215L385 245L407 290L405 370L395 450L372 520L370 575L350 620L335 648H290L245 632L200 600L155 560L125 520V450L130 390L150 330L184 285L235 240L280 234H330L360 265L385 300L395 330L390 400L385 470L370 545L340 570L300 590L277 592',
          'M184 250L168 300L165 380L148 440V520L170 570L205 605H260L300 610L325 596',
          'M560 415L545 455L535 510L522 570L515 620L495 690L460 770L420 825L377 845',
          'M482 547H545L590 530L638 510',
          'M548 640L560 650L575 690L600 735L640 775L670 825',
          'M610 612L595 660L565 710L530 770L505 810L482 823',
          'M645 636L615 645L590 665L570 700',
          'M938 417L920 420L880 450L830 470L795 490L760 506',
          'M838 480H880L930 490L952 503L945 518L900 535L858 553',
          'M750 573H930L965 583L977 610L970 645L950 665L930 673',
          'M870 592L868 620L858 645',
          'M790 632L775 640L765 690L762 730L775 765L800 795L835 820H980L1030 805L1070 788L1105 760',
          'M765 693L800 700L850 712L903 715',
        ].map((d) => <path key={d} d={d} vectorEffect="non-scaling-stroke" />)}
      </g>
    </svg>
  )
}

function Watermark() {
  return (
    <div className="pointer-events-none absolute right-[20px] bottom-[6px] w-[168px] italic" aria-hidden>
      <div className="flex font-['Noto_Sans_CJK_SC',sans-serif] text-[40px] leading-[42px] text-black">
        <span className="text-[#fa6233]">野火</span><span className="pl-1">论坛</span>
      </div>
      <div className="text-center font-['Liberation_Sans',sans-serif] text-[17px] leading-5 text-[#8e97a3]">www.proewildfire.cn</div>
      <svg width="20" height="44" viewBox="0 0 20 44" className="absolute -top-[24px] left-[64px]"><path d="M5 0c12 8 18 22 12 34-2 6-8 9-13 10 6-7 5-12 3-18 0-6-3-10-6-13 7 3 9 8 10 13 1-11-1-19-6-26z" fill="#fa6233" /></svg>
    </div>
  )
}

export default function App() {
  return (
    <div className="relative flex h-screen flex-col overflow-hidden font-['Noto_Sans','Noto_Sans_CJK_SC',sans-serif]">
      <TitleBar />
      <MenuBar />
      <Ribbon />
      <div className="flex min-h-0 flex-1">
        <ModelTree />
        <Viewport />
      </div>
      <StatusBar />
      <Taskbar />
      <RedInk />
      <Watermark />
    </div>
  )
}
